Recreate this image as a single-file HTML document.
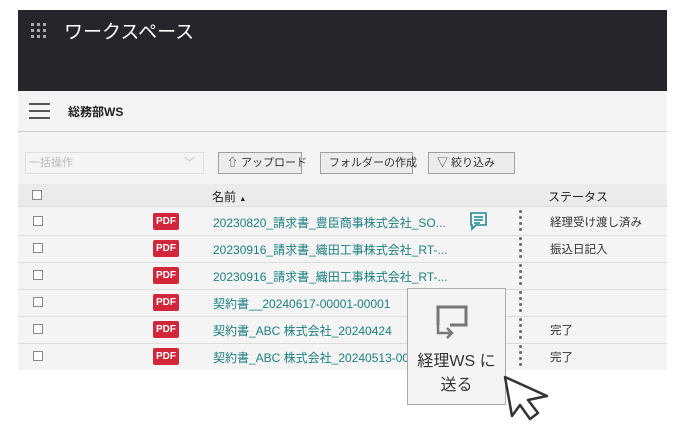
<!DOCTYPE html><html><head><meta charset="utf-8"><style>
*{margin:0;padding:0;box-sizing:border-box}
body{width:686px;height:431px;background:#fff;position:relative;overflow:hidden;font-family:"Liberation Sans","Noto Sans CJK JP",sans-serif}
.a{position:absolute}
.hdr{left:18px;top:10px;width:649px;height:81px;background:#25262b}
.gray{left:18px;top:91px;width:649px;height:279px;background:#f4f4f4}
.t{font-size:12px;color:#222;white-space:nowrap}
.btn{top:152px;height:22px;border:1px solid #a0a0a0;background:#ececec;font-size:11px;color:#333;line-height:20px;padding-left:8px;white-space:nowrap}
.row{left:18px;width:649px;height:1px;background:#dcdcdc}
.cb{width:10px;height:10px;border:1px solid #888;background:#fff}
.pdf{width:26px;height:17px;background:#d2263a;color:#fff;font-size:10px;font-weight:bold;line-height:17px;text-align:center;border-radius:2px}
.lk{font-size:12px;color:#1d7f80;white-space:nowrap}
.dots{width:3px}
.dots i{display:block;width:3px;height:3px;border-radius:50%;background:#666;margin-bottom:3px}
</style></head><body>
<div class="a hdr"></div>
<svg class="a" style="left:30px;top:22px" width="16" height="16"><g fill="#aaa"><rect x="1" y="1" width="3" height="3"/><rect x="7" y="1" width="3" height="3"/><rect x="13" y="1" width="3" height="3"/><rect x="1" y="7" width="3" height="3"/><rect x="7" y="7" width="3" height="3"/><rect x="13" y="7" width="3" height="3"/><rect x="1" y="13" width="3" height="3"/><rect x="7" y="13" width="3" height="3"/><rect x="13" y="13" width="3" height="3"/></g></svg>
<div class="a" style="left:64px;top:17px;color:#fff;font-size:19px">ワークスペース</div>
<div class="a gray"></div>
<div class="a" style="left:18px;top:131px;width:649px;height:1px;background:#ccc"></div>
<div class="a" style="left:29px;top:103px;width:21px;height:2px;background:#555"></div>
<div class="a" style="left:29px;top:110px;width:21px;height:2px;background:#555"></div>
<div class="a" style="left:29px;top:117px;width:21px;height:2px;background:#555"></div>
<div class="a t" style="left:68px;top:103px;font-weight:bold;font-size:12px">総務部WS</div>
<div class="a" style="left:25px;top:152px;width:179px;height:22px;border:1px solid #ddd;background:#f4f4f4;font-size:11px;color:#bbb;line-height:20px;padding-left:3px">一括操作<span style="position:absolute;right:8px;color:#bbb">﹀</span></div>
<div class="a btn" style="left:218px;width:84px">⇧ アップロード</div>
<div class="a btn" style="left:320px;width:93px">フォルダーの作成</div>
<div class="a btn" style="left:428px;width:87px">▽ 絞り込み</div>
<div class="a" style="left:18px;top:184px;width:649px;height:22px;background:#ebebeb"></div>
<div class="a row" style="top:206px"></div>
<div class="a cb" style="left:32px;top:190px"></div>
<div class="a t" style="left:212px;top:188px">名前 <span style="font-size:7px">▲</span></div>
<div class="a t" style="left:548px;top:188px">ステータス</div>

<div class="a row" style="top:235px"></div><div class="a row" style="top:262px"></div><div class="a row" style="top:289px"></div><div class="a row" style="top:316px"></div><div class="a row" style="top:343px"></div>

<div class="a cb" style="left:33px;top:216px"></div><div class="a pdf" style="left:153px;top:213px">PDF</div><div class="a lk" style="left:213px;top:214px">20230820_請求書_豊臣商事株式会社_SO...</div>
<div class="a cb" style="left:33px;top:243px"></div><div class="a pdf" style="left:153px;top:240px">PDF</div><div class="a lk" style="left:213px;top:241px">20230916_請求書_織田工事株式会社_RT-...</div>
<div class="a cb" style="left:33px;top:270px"></div><div class="a pdf" style="left:153px;top:267px">PDF</div><div class="a lk" style="left:213px;top:268px">20230916_請求書_織田工事株式会社_RT-...</div>
<div class="a cb" style="left:33px;top:297px"></div><div class="a pdf" style="left:153px;top:294px">PDF</div><div class="a lk" style="left:213px;top:295px">契約書__20240617-00001-00001</div>
<div class="a cb" style="left:33px;top:324px"></div><div class="a pdf" style="left:153px;top:321px">PDF</div><div class="a lk" style="left:213px;top:322px">契約書_ABC 株式会社_20240424</div>
<div class="a cb" style="left:33px;top:351px"></div><div class="a pdf" style="left:153px;top:348px">PDF</div><div class="a lk" style="left:213px;top:349px">契約書_ABC 株式会社_20240513-00</div>

<svg class="a" style="left:469px;top:211px" width="20" height="20"><path d="M2 2h15v12H7l-4 4V14H2z" fill="none" stroke="#1d8a8c" stroke-width="1.6"/><path d="M5 6h9M5 9h9M5 12h6" stroke="#1d8a8c" stroke-width="1.4"/></svg>

<div class="a dots" style="left:519px;top:210px"><i></i><i></i><i></i><i></i></div>
<div class="a dots" style="left:519px;top:237px"><i></i><i></i><i></i><i></i></div>
<div class="a dots" style="left:519px;top:264px"><i></i><i></i><i></i><i></i></div>
<div class="a dots" style="left:519px;top:291px"><i></i><i></i><i></i><i></i></div>
<div class="a dots" style="left:519px;top:318px"><i></i><i></i><i></i><i></i></div>
<div class="a dots" style="left:519px;top:345px"><i></i><i></i><i></i><i></i></div>

<div class="a t" style="left:550px;top:214px;font-size:11.5px;color:#333">経理受け渡し済み</div>
<div class="a t" style="left:550px;top:241px;font-size:11.5px;color:#333">振込日記入</div>
<div class="a t" style="left:550px;top:322px;font-size:11.5px;color:#333">完了</div>
<div class="a t" style="left:550px;top:349px;font-size:11.5px;color:#333">完了</div>

<div class="a" style="left:407px;top:288px;width:99px;height:117px;background:#f4f4f4;border:1px solid #aaa"></div>
<svg class="a" style="left:430px;top:300px" width="44" height="40"><path d="M8 25V7h28v18H20" fill="none" stroke="#777" stroke-width="3"/><path d="M8 25v8h14M17 28l5 5-5 5" fill="none" stroke="#777" stroke-width="2.5"/></svg>
<div class="a" style="left:410px;top:350px;width:93px;text-align:center;font-size:16px;color:#333;line-height:24px">経理WS に<br>送る</div>
<svg class="a" style="left:500px;top:372px" width="56" height="52"><path d="M5 5L12 44L20 33L30 47L38 41L28 28L47 24Z" fill="#fff" stroke="#333" stroke-width="2.5" stroke-linejoin="round"/></svg>
</body></html>
